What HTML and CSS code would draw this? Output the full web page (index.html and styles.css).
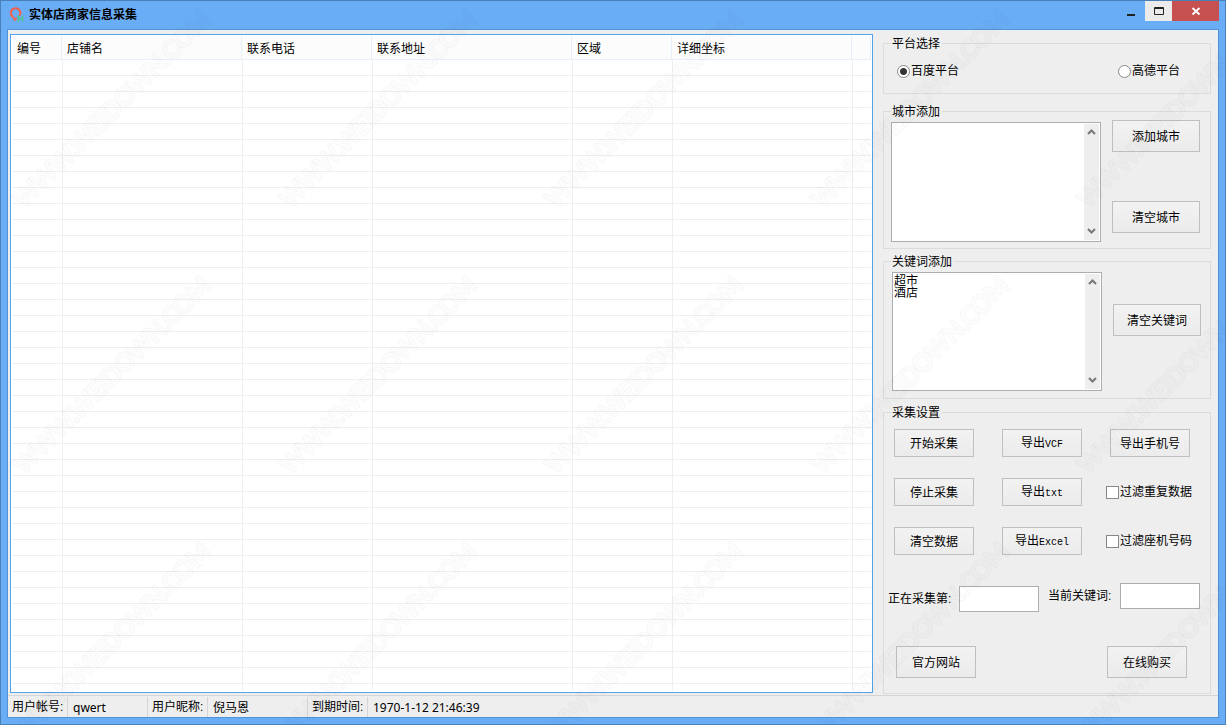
FILE: index.html
```html
<!DOCTYPE html>
<html lang="zh-CN">
<head>
<meta charset="utf-8">
<title>实体店商家信息采集</title>
<link rel="stylesheet" href="styles.css">
</head>
<body>
<div class="window">
  <header class="titlebar">
    <svg class="app-icon" viewBox="0 0 16 16" aria-hidden="true">
      <path d="M3.600 9.600A4.700 4.700 0 1 1 10.300 8.800" fill="none" stroke="#f5604f" stroke-width="2.200"/>
      <path d="M2.800 9L5.500 14.500L8.200 11.800L7.400 10.200L5.800 11.200L4.600 9.200z" fill="#f5604f"/>
      <path d="M9.500 8.500v6M13.500 8.500v6M9.500 11.500h4" fill="none" stroke="#4fc78c" stroke-width="1.600"/>
    </svg>
    <h1 class="title">实体店商家信息采集</h1>
    <div class="window-buttons">
      <button class="win-btn" type="button" aria-label="最小化"><svg viewBox="0 0 12 12"><path d="M1 9h8v2H1z" fill="#222"/></svg></button>
      <button class="win-btn win-max" type="button" aria-label="最大化"><svg viewBox="0 0 12 12"><path d="M1.500 2.500h9v7h-9zM1 3.500h10" fill="none" stroke="#222"/></svg></button>
      <button class="win-btn win-close" type="button" aria-label="关闭"><svg viewBox="0 0 12 12"><path d="M2.500 3l7 6.500M9.500 3l-7 6.500" fill="none" stroke="#fff" stroke-width="1.800"/></svg></button>
    </div>
  </header>

  <div class="client">
    <main class="content">
      <div class="list">
        <table class="grid">
          <colgroup><col class="c-id"><col class="c-name"><col class="c-phone"><col class="c-addr"><col class="c-area"><col class="c-coord"><col></colgroup>
          <thead><tr><th>编号</th><th>店铺名</th><th>联系电话</th><th>联系地址</th><th>区域</th><th>详细坐标</th><th></th></tr></thead>
        </table>
        <div class="rows"><span class="c-id"></span><span class="c-name"></span><span class="c-phone"></span><span class="c-addr"></span><span class="c-area"></span><span class="c-coord"></span></div>
      </div>

      <aside class="side">
        <fieldset class="group platform">
          <legend>平台选择</legend>
          <label><input type="radio" name="platform" checked>百度平台</label>
          <label><input type="radio" name="platform">高德平台</label>
        </fieldset>

        <fieldset class="group city">
          <legend>城市添加</legend>
          <div class="memo">
            <textarea aria-label="城市添加"></textarea>
            <div class="scroll" aria-hidden="true"><svg viewBox="0 0 9 8"><path d="M1 6l3.500-3.500L8 6"/></svg><svg viewBox="0 0 9 8"><path d="M1 2l3.500 3.500L8 2"/></svg></div>
          </div>
          <div class="memo-actions">
            <button class="btn" type="button">添加城市</button>
            <button class="btn" type="button">清空城市</button>
          </div>
        </fieldset>

        <fieldset class="group keyword">
          <legend>关键词添加</legend>
          <div class="memo">
            <textarea aria-label="关键词添加">超市
酒店</textarea>
            <div class="scroll" aria-hidden="true"><svg viewBox="0 0 9 8"><path d="M1 6l3.500-3.500L8 6"/></svg><svg viewBox="0 0 9 8"><path d="M1 2l3.500 3.500L8 2"/></svg></div>
          </div>
          <div class="memo-actions">
            <button class="btn" type="button">清空关键词</button>
          </div>
        </fieldset>

        <fieldset class="group settings">
          <legend>采集设置</legend>
          <div class="actions">
            <button class="btn" type="button">开始采集</button>
            <button class="btn" type="button"><span>导出<span class="latin">VCF</span></span></button>
            <button class="btn" type="button">导出手机号</button>
            <button class="btn" type="button">停止采集</button>
            <button class="btn" type="button"><span>导出<span class="latin">txt</span></span></button>
            <label><input type="checkbox">过滤重复数据</label>
            <button class="btn" type="button">清空数据</button>
            <button class="btn" type="button"><span>导出<span class="latin">Excel</span></span></button>
            <label><input type="checkbox">过滤座机号码</label>
          </div>
          <div class="progress">
            <div class="entry"><label for="current">正在采集第:</label><input id="current" class="field" type="text"></div>
            <div class="entry"><label for="word">当前关键词:</label><input id="word" class="field" type="text"></div>
          </div>
          <div class="links">
            <button class="btn" type="button">官方网站</button>
            <button class="btn" type="button">在线购买</button>
          </div>
        </fieldset>
      </aside>
    </main>

    <footer class="status">
      <span class="s-key">用户帐号:</span><span class="s-val">qwert</span>
      <span class="s-key">用户昵称:</span><span class="s-val s-nick">倪马恩</span>
      <span class="s-key">到期时间:</span><span class="s-val s-time">1970-1-12 21:46:39</span>
    </footer>
  </div>

  <svg class="watermark" aria-hidden="true">
    <defs>
      <mask id="hollow" maskUnits="userSpaceOnUse" x="-10" y="-40" width="320" height="60">
        <rect x="-10" y="-40" width="320" height="60" fill="#fff"/>
        <text class="mark-core">WWW.WEIDOWN.COM</text>
      </mask>
      <pattern id="mark" width="266" height="266" patternUnits="userSpaceOnUse">
        <g transform="translate(23 208) rotate(-45)">
          <text class="mark-fill">WWW.WEIDOWN.COM</text>
          <g mask="url(#hollow)"><text class="mark-edge">WWW.WEIDOWN.COM</text></g>
        </g>
      </pattern>
    </defs>
    <rect width="100%" height="100%" fill="url(#mark)"/>
  </svg>
</div>
</body>
</html>
```
FILE: styles.css
```css
* { box-sizing: border-box; }

body {
  margin: 0;
  font: 12px/16px "Liberation Sans", "Noto Sans CJK SC", sans-serif;
  color: #000;
}

button, input, textarea { font: inherit; color: inherit; margin: 0; }

.window {
  position: relative;
  display: flex;
  flex-direction: column;
  min-height: 100vh;
  padding: 0 6px 6px;
  background: #69adf6;
  border: 1px solid #4a80b8;
  overflow: hidden;
}

.titlebar { display: flex; height: 28px; padding-left: 2px; }
.app-icon { width: 16px; height: 16px; margin: 6px 4px 0 0; }
.title { flex: 1; margin: 6px 0 0; font-size: 12px; line-height: 16px; font-weight: 700; }

.window-buttons { display: flex; height: 20px; }
.win-btn {
  display: grid;
  place-items: center;
  width: 27px;
  padding: 0;
  border: 0;
  background: none;
}
.win-btn svg { width: 12px; height: 12px; }
.win-max { background: #ebebeb; }
.win-close { width: 47px; background: #c75050; }

.client {
  flex: 1;
  display: flex;
  flex-direction: column;
  border: 1px solid #5292d6;
  background: #eee;
}

.content { flex: 1; display: flex; padding: 4px 7px 1px 2px; gap: 10px; }

.list {
  flex: 1;
  display: flex;
  flex-direction: column;
  margin-bottom: 1px;
  padding: 1px;
  background: #fff;
  border: 1px solid #55a3e8;
}
.grid { width: 100%; table-layout: fixed; border-collapse: separate; border-spacing: 0; }
.grid th {
  height: 24px;
  padding: 3px 5px 0;
  background: #fcfcfc;
  border-right: 1px solid #e6eff7;
  border-bottom: 1px solid #e6eff7;
  text-align: left;
  font-weight: 400;
}
.c-id { width: 50px; }
.c-name { width: 180px; }
.c-phone { width: 130px; }
.c-addr { width: 200px; }
.c-area { width: 100px; }
.c-coord { width: 180px; }
.rows {
  flex: 1;
  display: flex;
  background: repeating-linear-gradient(#fff 0 15px, #efefef 15px 16px);
}
.rows span { border-right: 1px solid #efefef; }
.rows .c-id { width: 51px; }

.side { width: 328px; display: flex; flex-direction: column; padding-top: 1px; }

.group {
  min-width: 0;
  margin: 0;
  padding: 0;
  border: 1px solid #dcdcdc;
}
.group legend { height: 16px; padding: 0 2px 0 1px; line-height: 18px; }
.group label { display: flex; align-items: center; }

.platform { display: flex; justify-content: space-between; height: 59px; padding: 11px 30px 0 13px; margin-bottom: 9px; }
.platform legend { margin-left: -6px; }
.platform label { height: 18px; line-height: 22px; }

input[type="radio"], input[type="checkbox"] {
  appearance: none;
  width: 13px;
  height: 13px;
  margin: 0 1px 0 0;
  background: #fff;
  border: 1px solid #888;
}
input[type="radio"] { border-radius: 50%; }
input[type="radio"]:checked { background: radial-gradient(circle, #333 0 3px, #fff 4px); }

.city, .keyword { display: flex; justify-content: space-between; padding: 3px 10px 0 7px; }
.city { height: 146px; margin-bottom: 4px; }
.keyword { height: 146px; margin-bottom: 5px; padding: 3px 9px 0 8px; }
.keyword legend { margin-left: -1px; }

.memo {
  display: flex;
  width: 210px;
  height: 120px;
  padding: 1px;
  background: #fff;
  border: 1px solid #abadb3;
}
.keyword .memo { height: 119px; }
.memo textarea {
  flex: 1;
  min-width: 0;
  padding: 1px 0;
  border: 0;
  outline: 0;
  resize: none;
  overflow: hidden;
  line-height: 12px;
  background: none;
}
.scroll {
  display: flex;
  flex-direction: column;
  justify-content: space-between;
  width: 15px;
  padding: 4px 3px 5px;
  background: #eee;
}
.scroll svg { width: 9px; height: 8px; fill: none; stroke: #777; stroke-width: 2; }

.btn {
  display: grid;
  place-items: center;
  width: 80px;
  height: 32px;
  padding: 2px 0 0;
  background: linear-gradient(#f2f2f2, #ebebeb);
  border: 1px solid #bfbfbf;
}
.latin { font-family: "Liberation Mono", monospace; font-size: 10px; }
.memo-actions { display: flex; flex-direction: column; gap: 49px; }
.memo-actions .btn { width: 88px; }
.city .memo-actions { margin-top: -2px; }
.keyword .memo-actions { margin-top: 32px; }

.settings { flex: 1; padding: 9px 10px 0; }
.settings legend { margin-left: -3px; }
.actions {
  display: grid;
  grid-template-columns: 108px 108px 1fr;
  row-gap: 21px;
}
.actions .btn { height: 28px; }
.actions label { margin-left: -4px; line-height: 20px; white-space: nowrap; }
.progress { display: flex; align-items: flex-start; gap: 9px; margin: 28px 0 0 -6px; white-space: nowrap; }
.entry { display: flex; align-items: center; }
.entry:first-child { padding-top: 3px; }
.entry label { width: 71px; }
.entry + .entry label { width: 72px; }
.field { width: 80px; height: 26px; padding: 2px; border: 1px solid #abadb3; background: #fff; }
.links { display: flex; justify-content: space-between; margin-top: 34px; padding: 0 13px 0 2px; }

.status {
  display: flex;
  height: 22px;
  padding-top: 1px;
  border-top: 1px solid #d5d5d5;
  line-height: 21px;
}
.status span { white-space: nowrap; }
.status .s-key { width: 60px; padding-left: 4px; border-right: 1px solid #d5d5d5; }
.status .s-val { width: 80px; padding-left: 5px; border-right: 1px solid #d5d5d5; font-family: "Noto Sans", "Noto Sans CJK SC", sans-serif; }
.status .s-nick { width: 100px; }
.status .s-time { width: auto; border: 0; }

.watermark { position: absolute; inset: 0; width: 100%; height: 100%; pointer-events: none; }
.watermark text { font-family: Lato, sans-serif; font-size: 24px; stroke-linejoin: round; }
.mark-fill { fill: #000; fill-opacity: 0.01; }
.mark-core { fill: #000; stroke: #000; stroke-width: 1px; }
.mark-edge { fill: none; stroke: #000; stroke-opacity: 0.03; stroke-width: 3px; }
```
